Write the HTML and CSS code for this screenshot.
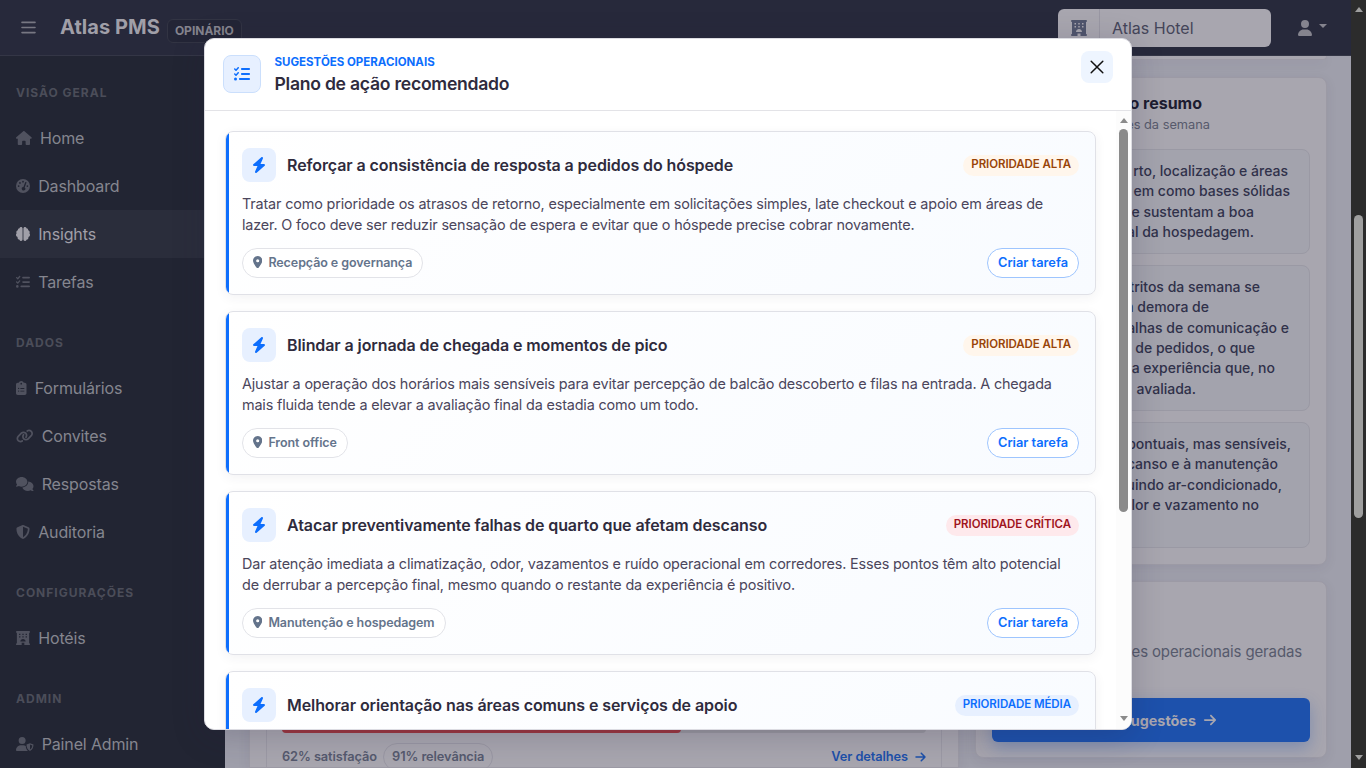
FILE: index.html
```
<!DOCTYPE html>
<html lang="pt-BR">
<head>
	<meta charset="UTF-8">
	<title>Atlas PMS</title>
	<link rel="stylesheet" href="styles.css">
</head>
<body>
	<svg class="sprite">
		<symbol id="i-check" viewBox="0 0 512 512"><path d="M152.1 38.2c9.9 8.9 10.7 24 1.8 33.9l-72 80c-4.4 4.9-10.6 7.8-17.2 7.9s-12.9-2.4-17.6-7L7 113C-2.3 103.6-2.3 88.4 7 79s24.6-9.4 33.9 0l22.1 22.1 55.1-61.2c8.9-9.9 24-10.7 33.9-1.8zm0 160c9.9 8.9 10.7 24 1.8 33.9l-72 80c-4.4 4.9-10.6 7.8-17.2 7.9s-12.9-2.4-17.6-7L7 273c-9.4-9.4-9.4-24.6 0-33.9s24.6-9.4 33.9 0l22.1 22.1 55.1-61.2c8.9-9.9 24-10.7 33.9-1.8zM224 96c0-17.7 14.3-32 32-32H480c17.7 0 32 14.3 32 32s-14.3 32-32 32H256c-17.7 0-32-14.3-32-32zm0 160c0-17.7 14.3-32 32-32H480c17.7 0 32 14.3 32 32s-14.3 32-32 32H256c-17.7 0-32-14.3-32-32zM160 416c0-17.7 14.3-32 32-32H480c17.7 0 32 14.3 32 32s-14.3 32-32 32H192c-17.7 0-32-14.3-32-32zM48 368a48 48 0 1 1 0 96 48 48 0 1 1 0-96z"/></symbol>
		<symbol id="i-bolt" viewBox="0 0 448 512"><path d="M349.4 44.6c5.9-13.7 1.5-29.7-10.6-38.5s-28.6-8-39.9 1.8l-256 224c-10 8.8-13.6 22.9-8.9 35.3S50.7 288 64 288H175.5L98.6 467.4c-5.9 13.7-1.5 29.7 10.6 38.5s28.6 8 39.9-1.8l256-224c10-8.8 13.6-22.9 8.9-35.3s-16.6-20.7-30-20.7H272.5L349.4 44.6z"/></symbol>
		<symbol id="i-pin" viewBox="0 0 384 512"><path d="M215.7 499.2C267 435 384 279.4 384 192C384 86 298 0 192 0S0 86 0 192c0 87.4 117 243 168.3 307.2c12.3 15.3 35.1 15.3 47.4 0zM192 128a64 64 0 1 1 0 128 64 64 0 1 1 0-128z"/></symbol>
		<symbol id="i-arrow" viewBox="0 0 448 512"><path d="M438.6 278.6c12.5-12.5 12.5-32.8 0-45.3l-160-160c-12.5-12.5-32.8-12.5-45.3 0s-12.5 32.8 0 45.3L338.8 224 32 224c-17.7 0-32 14.3-32 32s14.3 32 32 32l306.7 0L233.4 393.4c-12.5 12.5-12.5 32.8 0 45.3s32.8 12.5 45.3 0l160-160z"/></symbol>
		<symbol id="i-hotel" viewBox="0 0 512 512"><path fill-rule="evenodd" d="M32 0H480a32 32 0 0 1 0 64V448a32 32 0 0 1 0 64H304V432H208V512H32a32 32 0 0 1 0-64V64A32 32 0 0 1 32 0zM112 96V144H160V96zM232 96V144H280V96zM352 96V144H400V96zM112 192V240H160V192zM232 192V240H280V192zM352 192V240H400V192zM160 384H352C352 331 309 288 256 288S160 331 160 384z"/></symbol>
	</svg>

	<div class="window">
		<div class="app">
			<header class="topbar">
				<svg class="burger" viewBox="0 0 15 13"><path d="M1 1.4h13M1 6.5h13M1 11.6h13"/></svg>
				<span class="brand">Atlas PMS</span>
				<span class="brand-tag">OPINÁRIO</span>
				<div class="hotel-select">
					<span class="addon"><svg class="icon"><use href="#i-hotel"/></svg></span>
					<span class="hotel-name">Atlas Hotel</span>
				</div>
				<svg class="icon user" viewBox="0 0 448 512"><path d="M224 256A128 128 0 1 0 224 0a128 128 0 1 0 0 256zm-45.7 48C79.8 304 0 383.8 0 482.3C0 498.7 13.3 512 29.7 512H418.3c16.4 0 29.7-13.3 29.7-29.7C448 383.8 368.2 304 269.7 304H178.3z"/></svg>
				<span class="caret"></span>
			</header>

			<nav class="sidebar">
				<h6>VISÃO GERAL</h6>
				<a class="nav-link"><svg class="icon w16" viewBox="0 0 576 512"><path d="M575.8 255.5c0 18-15 32.1-32 32.1h-32l.7 160.2c0 2.7-.2 5.4-.5 8.1V472c0 22.1-17.9 40-40 40H456c-1.1 0-2.2 0-3.3-.1c-1.4 .1-2.8 .1-4.2 .1H416 392c-22.1 0-40-17.9-40-40V448 384c0-17.7-14.3-32-32-32H256c-17.7 0-32 14.3-32 32v64 24c0 22.1-17.9 40-40 40H160 128.1c-1.5 0-3-.1-4.5-.2c-1.2 .1-2.4 .2-3.6 .2H104c-22.1 0-40-17.9-40-40V360c0-.9 0-1.9 .1-2.8V287.6H32c-18 0-32-14-32-32.1c0-9 3-17 10-24L266.4 8c7-7 15-8 22-8s15 2 21 7L564.8 231.5c8 7 12 15 11 24z"/></svg>Home</a>
				<a class="nav-link"><svg class="icon" viewBox="0 0 512 512"><path fill-rule="evenodd" d="M0 256a256 256 0 1 1 512 0A256 256 0 1 1 0 256zM256 64a32 32 0 1 0 0 64 32 32 0 1 0 0-64zM144 112a32 32 0 1 0 0 64 32 32 0 1 0 0-64zM96 224a32 32 0 1 0 0 64 32 32 0 1 0 0-64zM416 224a32 32 0 1 0 0 64 32 32 0 1 0 0-64zM336 122L273 290a64 64 0 1 0 45 17L381 139a24 24 0 1 0-45-17z"/></svg>Dashboard</a>
				<a class="nav-link active"><svg class="icon" viewBox="0 0 512 512"><path d="M184 0c31 0 56 25 56 56V456a56 56 0 0 1-111 8c-1 0-2 0-1 0a72 72 0 0 1-67-98A80 80 0 0 1 25 230 72 72 0 0 1 66 118 64 64 0 0 1 129 49 56 56 0 0 1 184 0zM328 0c-31 0-56 25-56 56V456a56 56 0 0 0 111 8h1a72 72 0 0 0 67-98 80 80 0 0 0 36-136 72 72 0 0 0-41-112A64 64 0 0 0 383 49 56 56 0 0 0 328 0z"/></svg>Insights</a>
				<a class="nav-link"><svg class="icon"><use href="#i-check"/></svg>Tarefas</a>
				<h6>DADOS</h6>
				<a class="nav-link"><svg class="icon w11" viewBox="0 0 384 512"><path fill-rule="evenodd" d="M192 0c-42 0-77 27-91 64H64C29 64 0 93 0 128V448c0 35 29 64 64 64H320c35 0 64-29 64-64V128c0-35-29-64-64-64H283C269 27 234 0 192 0zM192 64a32 32 0 1 1 0 64 32 32 0 1 1 0-64zM96 248a24 24 0 1 0 0 48 24 24 0 1 0 0-48zM160 256V288H304V256zM96 344a24 24 0 1 0 0 48 24 24 0 1 0 0-48zM160 352V384H304V352z"/></svg>Formulários</a>
				<a class="nav-link"><svg class="icon w18" viewBox="0 0 640 512"><path d="M579.8 267.7c56.5-56.5 56.5-148 0-204.5c-50-50-128.8-56.5-186.3-15.4l-1.6 1.1c-14.4 10.3-17.7 30.3-7.4 44.6s30.3 17.7 44.6 7.4l1.6-1.1c32.1-22.9 76-19.3 103.8 8.6c31.5 31.5 31.5 82.5 0 114L422.3 334.8c-31.5 31.5-82.5 31.5-114 0c-27.9-27.9-31.5-71.8-8.6-103.8l1.1-1.6c10.3-14.4 6.9-34.4-7.4-44.6s-34.4-6.9-44.6 7.4l-1.1 1.6C206.5 251.2 213 330 263 380c56.5 56.5 148 56.5 204.5 0L579.8 267.7zM60.2 244.3c-56.5 56.5-56.5 148 0 204.5c50 50 128.8 56.5 186.3 15.4l1.6-1.1c14.4-10.3 17.7-30.3 7.4-44.6s-30.3-17.7-44.6-7.4l-1.6 1.1c-32.1 22.9-76 19.3-103.8-8.6C74 372 74 321 105.5 289.5L217.7 177.2c31.5-31.5 82.5-31.5 114 0c27.9 27.9 31.5 71.8 8.6 103.9l-1.1 1.6c-10.3 14.4-6.9 34.4 7.4 44.6s34.4 6.9 44.6-7.4l1.1-1.6C433.5 260.8 427 182 377 132c-56.5-56.5-148-56.5-204.5 0L60.2 244.3z"/></svg>Convites</a>
				<a class="nav-link"><svg class="icon w18" viewBox="0 0 640 512"><path d="M208 352c114.9 0 208-78.8 208-176S322.9 0 208 0S0 78.8 0 176c0 38.6 14.7 74.3 39.6 103.4c-3.5 9.4-8.7 17.7-14.2 24.7c-4.8 6.2-9.7 11-13.3 14.3c-1.8 1.6-3.3 2.9-4.3 3.7c-.5 .4-.9 .7-1.1 .8l-.2 .2C1 327.2-1.4 334.4 .8 340.9S9.1 352 16 352c21.8 0 43.8-5.6 62.1-12.5c9.2-3.5 17.8-7.4 25.2-11.4C134.1 343.3 169.8 352 208 352zM448 176c0 112.3-99.1 196.9-216.5 207C255.8 457.4 336.4 512 432 512c38.2 0 73.9-8.7 104.7-23.9c7.5 4 16 7.9 25.2 11.4c18.3 6.9 40.3 12.5 62.1 12.5c6.9 0 13.1-4.5 15.2-11.1c2.1-6.6-.2-13.8-5.8-17.9l-.2-.2c-.2-.2-.6-.4-1.1-.8c-1-.8-2.5-2-4.3-3.7c-3.6-3.3-8.5-8.1-13.3-14.3c-5.5-7-10.7-15.4-14.2-24.7c24.9-29 39.6-64.7 39.6-103.4c0-92.8-84.9-168.9-192.6-175.5c.4 5.1 .6 10.3 .6 15.5z"/></svg>Respostas</a>
				<a class="nav-link"><svg class="icon" viewBox="0 0 512 512"><path d="M256 0c4.6 0 9.2 1 13.4 2.9L457.7 82.8c22 9.3 38.4 31 38.3 57.2c-.5 99.2-41.3 280.7-213.6 363.2c-16.7 8-36.1 8-52.8 0C57.3 420.7 16.5 239.2 16 140c-.1-26.2 16.3-47.9 38.3-57.2L242.7 2.9C246.8 1 251.4 0 256 0zm0 66.8V444.8C394 378 431.1 230.1 432 141.4L256 66.8z"/></svg>Auditoria</a>
				<h6>CONFIGURAÇÕES</h6>
				<a class="nav-link"><svg class="icon"><use href="#i-hotel"/></svg>Hotéis</a>
				<h6>ADMIN</h6>
				<a class="nav-link"><svg class="icon w18" viewBox="0 0 640 512"><path fill-rule="evenodd" d="M224 256A128 128 0 1 0 224 0a128 128 0 1 0 0 256zM178 304C80 304 0 384 0 482c0 17 13 30 30 30H418c7 0 13-2 18-6-48-42-76-108-79-180-26-14-56-22-87-22zM512 225l128 50c0 90-30 185-128 236-98-51-128-146-128-236zM512 277V460c56-37 80-95 83-151z"/></svg>Painel Admin</a>
			</nav>

			<main class="content">
				<section class="panel themes">
					<div class="theme">
						<div class="track"><div class="fill" style="width: 62%"></div></div>
						<div class="theme-foot">
							<span>62% satisfação</span>
							<span class="chip">91% relevância</span>
							<a class="details">Ver detalhes <svg class="icon"><use href="#i-arrow"/></svg></a>
						</div>
					</div>
				</section>
				<aside class="side">
					<section class="panel stub"></section>
					<section class="panel summary">
						<h5 class="r108">o resumo</h5>
						<p class="sub r100">es da semana</p>
						<div class="note">
							<p class="r9">rto, localização e áreas</p>
							<p class="r7">em como bases sólidas</p>
							<p class="r43">e sustentam a boa</p>
							<p class="r43">al da hospedagem.</p>
						</div>
						<div class="note">
							<p class="r37">tritos da semana se</p>
							<p class="r88">a demora de</p>
							<p class="r8">alhas de comunicação e</p>
							<p class="r42">de pedidos, o que</p>
							<p class="r22">a experiência que, no</p>
							<p class="r101">avaliada.</p>
						</div>
						<div class="note tall">
							<p class="r6">pontuais, mas sensíveis,</p>
							<p class="r19">canso e à manutenção</p>
							<p class="r15">uindo ar-condicionado,</p>
							<p class="r38">lor e vazamento no</p>
						</div>
					</section>
					<section class="panel cta">
						<p>ões operacionais geradas</p>
						<a class="cta-button">ugestões <svg class="icon"><use href="#i-arrow"/></svg></a>
					</section>
				</aside>
			</main>
		</div>
		<div class="scrollbar page-scroll"><i class="up"></i><b></b><i class="down"></i></div>
	</div>

	<div class="modal">
		<header class="modal-header">
			<span class="modal-icon"><svg class="icon"><use href="#i-check"/></svg></span>
			<div class="modal-heading">
				<div class="eyebrow">SUGESTÕES OPERACIONAIS</div>
				<h2>Plano de ação recomendado</h2>
			</div>
			<button class="close"><svg viewBox="0 0 14 14"><path d="M1.2 1.2l11.6 11.6M12.8 1.2L1.2 12.8"/></svg></button>
		</header>
		<div class="modal-body">
			<div class="cards">
				<article class="card">
					<div class="card-head">
						<span class="bolt"><svg class="icon"><use href="#i-bolt"/></svg></span>
						<h3>Reforçar a consistência de resposta a pedidos do hóspede</h3>
						<span class="priority high">PRIORIDADE ALTA</span>
					</div>
					<p>Tratar como prioridade os atrasos de retorno, especialmente em solicitações simples, late checkout e apoio em áreas de<br>lazer. O foco deve ser reduzir sensação de espera e evitar que o hóspede precise cobrar novamente.</p>
					<div class="card-foot">
						<span class="area"><svg class="icon"><use href="#i-pin"/></svg>Recepção e governança</span>
						<button class="create">Criar tarefa</button>
					</div>
				</article>
				<article class="card">
					<div class="card-head">
						<span class="bolt"><svg class="icon"><use href="#i-bolt"/></svg></span>
						<h3>Blindar a jornada de chegada e momentos de pico</h3>
						<span class="priority high">PRIORIDADE ALTA</span>
					</div>
					<p>Ajustar a operação dos horários mais sensíveis para evitar percepção de balcão descoberto e filas na entrada. A chegada<br>mais fluida tende a elevar a avaliação final da estadia como um todo.</p>
					<div class="card-foot">
						<span class="area"><svg class="icon"><use href="#i-pin"/></svg>Front office</span>
						<button class="create">Criar tarefa</button>
					</div>
				</article>
				<article class="card">
					<div class="card-head">
						<span class="bolt"><svg class="icon"><use href="#i-bolt"/></svg></span>
						<h3>Atacar preventivamente falhas de quarto que afetam descanso</h3>
						<span class="priority critical">PRIORIDADE CRÍTICA</span>
					</div>
					<p>Dar atenção imediata a climatização, odor, vazamentos e ruído operacional em corredores. Esses pontos têm alto potencial<br>de derrubar a percepção final, mesmo quando o restante da experiência é positivo.</p>
					<div class="card-foot">
						<span class="area"><svg class="icon"><use href="#i-pin"/></svg>Manutenção e hospedagem</span>
						<button class="create">Criar tarefa</button>
					</div>
				</article>
				<article class="card">
					<div class="card-head">
						<span class="bolt"><svg class="icon"><use href="#i-bolt"/></svg></span>
						<h3>Melhorar orientação nas áreas comuns e serviços de apoio</h3>
						<span class="priority medium">PRIORIDADE MÉDIA</span>
					</div>
				</article>
			</div>
			<div class="scrollbar modal-scroll"><i class="up"></i><b></b><i class="down"></i></div>
		</div>
	</div>
</body>
</html>
```
FILE: styles.css
```
* {
	box-sizing: border-box;
}
body {
	margin: 0;
	height: 768px;
	overflow: hidden;
	font-family: Inter, "Liberation Sans", sans-serif;
	font-size: 16px;
	color: #2f2b3d;
}
h2, h3, h5, h6, p {
	margin: 0;
}
button {
	font-family: inherit;
	padding: 0;
}
.sprite {
	display: none;
}
.icon {
	width: 14px;
	height: 14px;
	flex: none;
	fill: currentColor;
}
.w16 { width: 15.75px; }
.w11 { width: 10.5px; }
.w18 { width: 17.5px; }

.window {
	display: flex;
	height: 768px;
}
.app {
	flex: 1;
	display: grid;
	grid-template-columns: 225px 1fr;
	grid-template-rows: 56px 712px;
	background: #9f9fab;
}

/* top bar */
.topbar {
	grid-column: 1 / 3;
	display: flex;
	align-items: center;
	background: #27293b;
	border-bottom: 1px solid #343646;
	padding: 0 24px 0 20px;
}
.burger {
	width: 15px;
	height: 13px;
	margin-left: 0.5px;
	stroke: #777782;
	stroke-width: 1.6;
	stroke-linecap: round;
}
.brand {
	margin: -2px 0 0 24.5px;
	font-size: 20px;
	font-weight: 700;
	letter-spacing: 0.05px;
	color: #a09fa8;
	line-height: 24px;
}
.brand-tag {
	margin: 6px 0 0 7px;
	height: 24px;
	width: 75px;
	border: 1px solid #323443;
	border-radius: 6px;
	background: #232536;
	font-size: 12px;
	font-weight: 700;
	line-height: 21px;
	text-align: center;
	color: #85848e;
}
.hotel-select {
	display: flex;
	width: 213px;
	height: 38px;
	margin-left: auto;
	background: #a8a6af;
	border-radius: 6px;
	color: #444559;
}
.addon {
	display: flex;
	align-items: center;
	justify-content: center;
	width: 42px;
	border-right: 1px solid #9997a3;
	color: #50556d;
}
.addon .icon {
	width: 16px;
	height: 16px;
}
.hotel-name {
	padding-left: 12px;
	line-height: 38px;
}
.user {
	width: 16px;
	height: 16px;
	margin-left: 26px;
	color: #85848e;
}
.caret {
	margin: -3px 0 0 6px;
	border: 4px solid transparent;
	border-top-color: #85848e;
	border-bottom: 0;
}

/* sidebar */
.sidebar {
	background: #222533;
	color: #85868f;
	overflow: hidden;
}
.sidebar h6 {
	height: 58px;
	padding: 28px 16px 0;
	font-size: 12px;
	font-weight: 700;
	line-height: 17px;
	letter-spacing: 1px;
	color: #4b4d59;
}
.nav-link {
	display: flex;
	align-items: center;
	gap: 8.2px;
	height: 48px;
	padding-left: 16px;
	letter-spacing: -0.14px;
}
.nav-link .icon {
	color: #50525f;
}
.nav-link.active, .nav-link.active .icon {
	background: #2a2d3b;
	color: #a09fa8;
}

/* page behind the modal */
.content {
	display: flex;
	gap: 16px;
	padding: 0 24px;
	overflow: hidden;
}
.panel {
	background: #a8a6af;
	border: 1px solid #9c9aa5;
	border-radius: 8px;
	box-shadow: 0 3px 12px rgba(47, 43, 75, .08);
}
.themes {
	width: 710px;
	padding: 0 16px;
	border-radius: 0;
}
.theme {
	height: 760px;
	border: 1px solid #9c9aa5;
	border-width: 0 1px;
	padding: 668px 15px 0;
}
.track {
	height: 8px;
	border-radius: 4px;
	background: #98969f;
}
.fill {
	height: 8px;
	border-radius: 4px;
	background: #9c363f;
}
.theme-foot {
	display: flex;
	align-items: center;
	margin-top: 10px;
	font-size: 12.8px;
	font-weight: 600;
	line-height: 14px;
	letter-spacing: -0.09px;
	color: #565a6e;
}
.chip {
	margin-left: 6px;
	padding: 0 8px;
	border: 1px solid #9997a3;
	border-radius: 14px;
	line-height: 26px;
}
.details {
	display: flex;
	align-items: center;
	gap: 7px;
	margin-left: auto;
	color: #1d50a9;
}
.details .icon {
	width: 11px;
	height: 12px;
}
.side {
	width: 352px;
}
.stub {
	height: 4px;
	border-top: 0;
	border-radius: 0 0 8px 8px;
}
.summary {
	height: 488px;
	margin-top: 17px;
	padding: 15px 16px;
	text-align: right;
	white-space: nowrap;
}
.summary h5 {
	font-size: 16px;
	font-weight: 700;
	line-height: 20px;
	color: #1d1c30;
}
.sub {
	margin: 3px 0 15px;
	font-size: 12.8px;
	line-height: 18px;
	color: #575a6c;
}
.note {
	margin-bottom: 11px;
	padding: 11px 12px;
	border: 1px solid #9a99a4;
	border-radius: 8px;
	background: #a3a3ad;
	font-size: 14px;
	font-weight: 500;
	line-height: 20.3px;
	color: #30314a;
}
.tall {
	height: 126px;
}
/* ragged line ends */
.r6 { padding-right: 6px; }
.r7 { padding-right: 7px; }
.r8 { padding-right: 8px; }
.r9 { padding-right: 9px; }
.r15 { padding-right: 15px; }
.r19 { padding-right: 19px; }
.r22 { padding-right: 22px; }
.r37 { padding-right: 37px; }
.r38 { padding-right: 38px; }
.r42 { padding-right: 42px; }
.r43 { padding-right: 43px; }
.r88 { padding-right: 88px; }
.r100 { padding-right: 100px; }
.r101 { padding-right: 101px; }
.r108 { padding-right: 108px; }

.cta {
	height: 177px;
	margin-top: 16px;
	padding: 58px 16px 0;
}
.cta p {
	padding-right: 8px;
	font-size: 15px;
	line-height: 24px;
	letter-spacing: -0.14px;
	text-align: right;
	color: #565a6c;
}
.cta-button {
	display: flex;
	align-items: center;
	justify-content: flex-end;
	gap: 7px;
	height: 44px;
	margin-top: 34px;
	padding-right: 93px;
	border-radius: 6px;
	background: #1d51ac;
	box-shadow: 0 6px 16px rgba(29, 81, 172, .3);
	font-size: 14.4px;
	font-weight: 700;
	color: #a8a6af;
}

/* scrollbars */
.scrollbar {
	display: flex;
	flex: none;
	flex-direction: column;
	align-items: center;
	width: 15px;
}
.scrollbar i {
	border: 4px solid transparent;
}
.scrollbar b {
	width: 9px;
	border-radius: 5px;
}
.scrollbar .up {
	border-top: 0;
	border-bottom: 5px solid #8b8b8b;
}
.scrollbar .down {
	border-bottom: 0;
	border-top: 5px solid #8b8b8b;
	margin-top: auto;
}
.page-scroll {
	background: #2c2c2c;
	padding: 7px 0 8px;
}
.page-scroll .up { border-bottom-color: #9f9f9f; }
.page-scroll .down { border-top-color: #9f9f9f; }
.page-scroll b {
	height: 303px;
	margin-top: 203px;
	background: #9f9f9f;
}
.modal-scroll {
	background: #fcfcfc;
	padding: 7px 0 8px;
}
.modal-scroll b {
	height: 383px;
	margin-top: 6px;
	background: #8b8b8b;
}

/* modal */
.modal {
	position: absolute;
	left: 204px;
	top: 38px;
	width: 928px;
	height: 692px;
	overflow: hidden;
	display: flex;
	flex-direction: column;
	background: #fff;
	border: 1px solid #dcdce2;
	border-radius: 10px;
	box-shadow: 0 6px 32px rgba(35, 32, 60, .22);
}
.modal-header {
	display: flex;
	height: 72px;
	flex: none;
	padding: 16px 18px 0;
	border-bottom: 1px solid #e3e3e7;
}
.modal-icon {
	display: flex;
	align-items: center;
	justify-content: center;
	width: 38px;
	height: 38px;
	border: 1px solid #cbdffc;
	border-radius: 8px;
	background: #e7f0ff;
	color: #0d6efd;
}
.modal-icon .icon {
	width: 16px;
	height: 16px;
}
.modal-heading {
	margin-left: 13.5px;
}
.eyebrow {
	font-size: 11.5px;
	font-weight: 700;
	line-height: 14px;
	color: #0d6efd;
}
.modal-heading h2 {
	margin-top: 4px;
	font-size: 17.6px;
	font-weight: 600;
	line-height: 22px;
	letter-spacing: -0.26px;
}
.close {
	display: flex;
	align-items: center;
	justify-content: center;
	width: 32px;
	height: 32px;
	margin: -4px 0 0 auto;
	border: 0;
	border-radius: 8px;
	background: #eef5ff;
}
.close svg {
	width: 14px;
	height: 14px;
	stroke: #111;
	stroke-width: 1.5;
	stroke-linecap: round;
}
.modal-body {
	display: flex;
	flex: 1;
	min-height: 0;
}
.cards {
	flex: 1;
	min-width: 0;
	display: flex;
	flex-direction: column;
	gap: 16px;
	padding: 20px 20px 0;
}
.card {
	position: relative;
	flex: none;
	height: 164px;
	padding: 16px;
	overflow: hidden;
	border: 1px solid #e0e1e7;
	border-radius: 8px;
	background: linear-gradient(135deg, #fff, #f8fbff);
	box-shadow: 0 3px 12px rgba(47, 43, 61, .06);
}
.card::before {
	content: "";
	position: absolute;
	left: 0;
	top: 0;
	bottom: 0;
	width: 3px;
	background: #0d6efd;
}
.card-head {
	display: flex;
	align-items: center;
}
.bolt {
	display: flex;
	align-items: center;
	justify-content: center;
	width: 34px;
	height: 34px;
	border-radius: 8px;
	background: #e7f0ff;
	color: #0d6efd;
}
.bolt .icon {
	width: 14px;
	height: 16px;
}
.card h3 {
	margin-left: 11px;
	font-size: 16px;
	font-weight: 600;
	line-height: 20px;
	letter-spacing: -0.09px;
}
.priority {
	margin-left: auto;
	padding: 0 8px 2px;
	border-radius: 11px;
	font-size: 11.5px;
	font-weight: 600;
	line-height: 19px;
	letter-spacing: -0.07px;
}
.high {
	background: #fff6ec;
	color: #994408;
}
.critical {
	background: #fee9ec;
	color: #a01420;
}
.medium {
	background: #e7f0ff;
	color: #0d6efd;
}
.card p {
	margin-top: 11px;
	font-size: 14.4px;
	line-height: 21px;
	letter-spacing: -0.158px;
	color: #4b465c;
	white-space: nowrap;
}
.card-foot {
	display: flex;
	justify-content: space-between;
	margin-top: 13px;
}
.area {
	display: flex;
	align-items: center;
	gap: 6px;
	height: 30px;
	padding: 0 10px 2px;
	border: 1px solid #e2e3e8;
	border-radius: 15px;
	background: #fff;
	font-size: 12.5px;
	font-weight: 600;
	letter-spacing: -0.08px;
	color: #64748b;
}
.area .icon {
	width: 9.4px;
	height: 12.5px;
}
.create {
	height: 30px;
	padding: 0 10px 2px;
	border: 1px solid #9ec5fe;
	border-radius: 15px;
	background: #fff;
	font-size: 12.8px;
	font-weight: 600;
	color: #0d6efd;
}
```
